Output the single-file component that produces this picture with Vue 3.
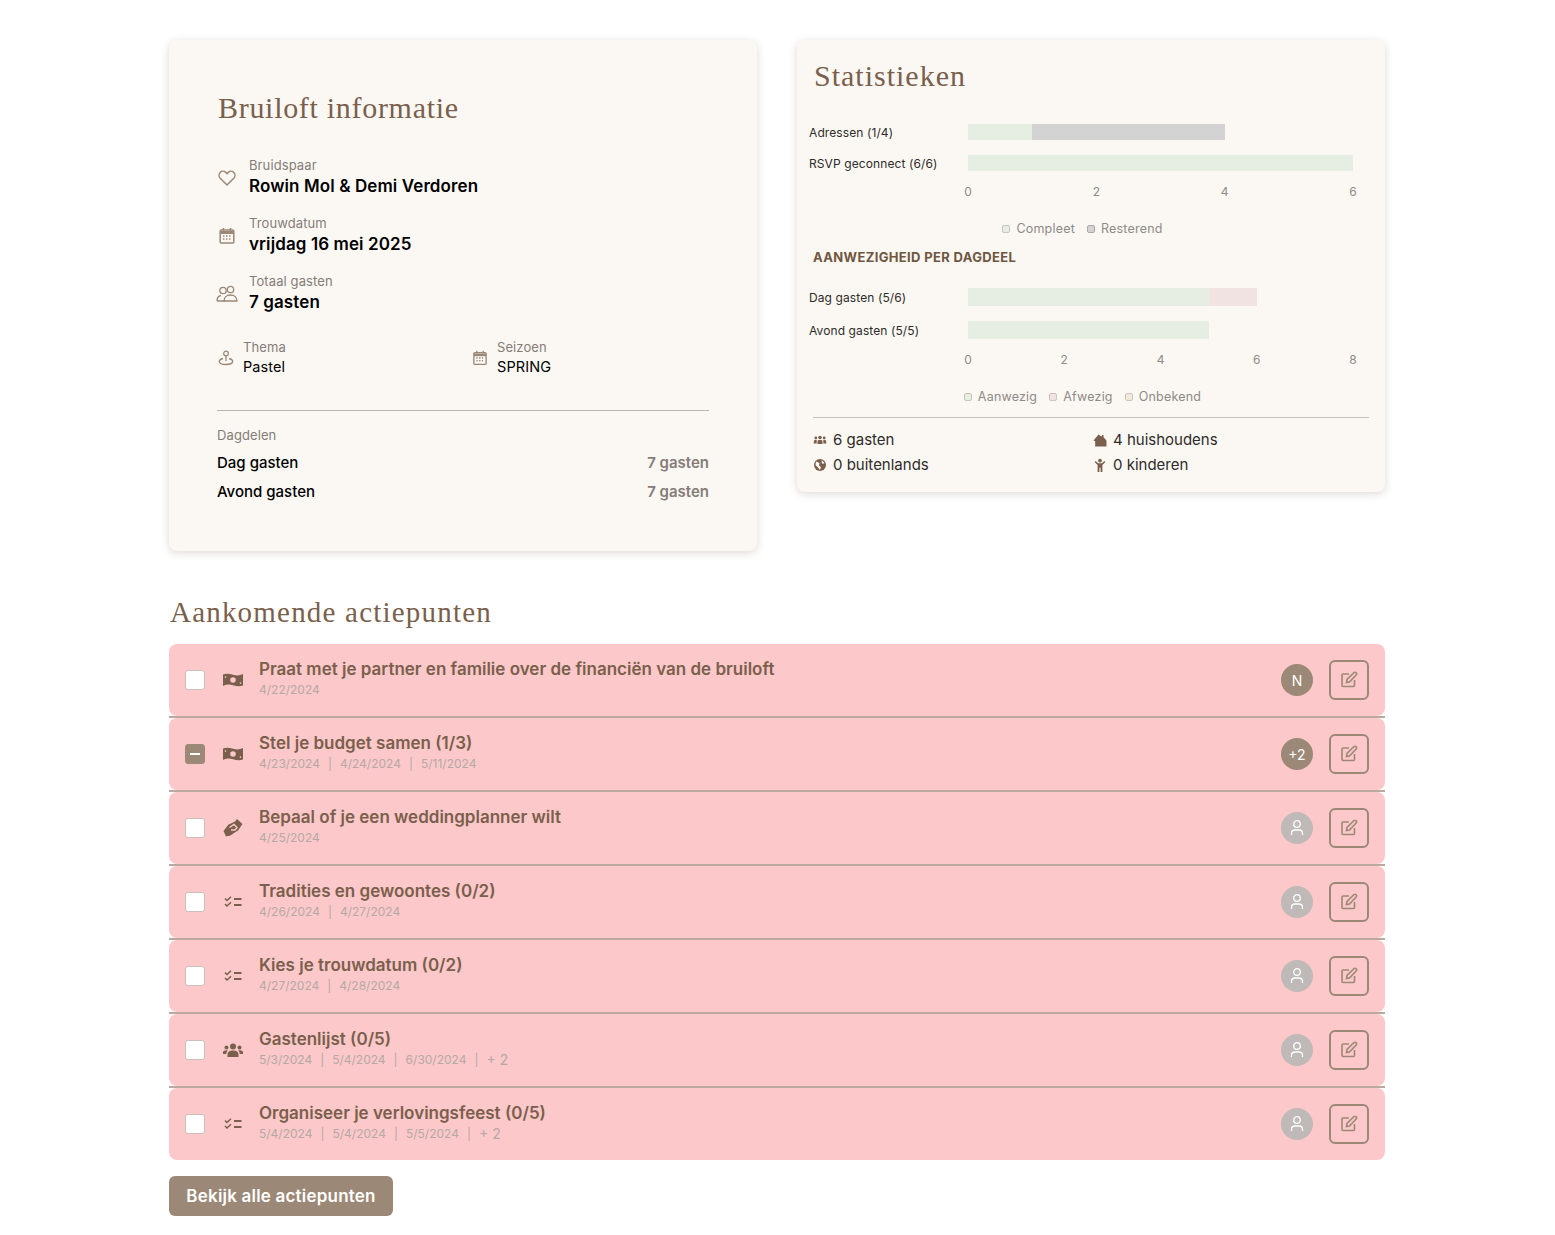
<script setup>
const coupleRows = [
  { label: "Bruidspaar", value: "Rowin Mol & Demi Verdoren", icon: "heart" },
  { label: "Trouwdatum", value: "vrijdag 16 mei 2025", icon: "calendar" },
  { label: "Totaal gasten", value: "7 gasten", icon: "people" },
];

const chartOne = {
  max: 6,
  ticks: [0, 2, 4, 6],
  rows: [
    { label: "Adressen (1/4)", parts: [{ value: 1, color: "#e6ede3" }, { value: 3, color: "#d3d3d3" }] },
    { label: "RSVP geconnect (6/6)", parts: [{ value: 6, color: "#e6ede3" }] },
  ],
};

const chartTwo = {
  max: 8,
  ticks: [0, 2, 4, 6, 8],
  rows: [
    { label: "Dag gasten (5/6)", parts: [{ value: 5, color: "#e6ede3" }, { value: 1, color: "#f0e3e1" }] },
    { label: "Avond gasten (5/5)", parts: [{ value: 5, color: "#e6ede3" }] },
  ],
};

const actions = [
  { title: "Praat met je partner en familie over de financiën van de bruiloft", dates: ["4/22/2024"], icon: "money", avatar: "N" },
  { title: "Stel je budget samen (1/3)", dates: ["4/23/2024", "4/24/2024", "5/11/2024"], icon: "money", avatar: "+2", partial: true },
  { title: "Bepaal of je een weddingplanner wilt", dates: ["4/25/2024"], icon: "hands" },
  { title: "Tradities en gewoontes (0/2)", dates: ["4/26/2024", "4/27/2024"], icon: "list" },
  { title: "Kies je trouwdatum (0/2)", dates: ["4/27/2024", "4/28/2024"], icon: "list" },
  { title: "Gastenlijst (0/5)", dates: ["5/3/2024", "5/4/2024", "6/30/2024", "+ 2"], icon: "users" },
  { title: "Organiseer je verlovingsfeest (0/5)", dates: ["5/4/2024", "5/4/2024", "5/5/2024", "+ 2"], icon: "list" },
];
</script>

<template>
  <main class="page">
    <div class="top-grid">
      <section class="card info-card">
        <h2 class="info-title">Bruiloft informatie</h2>

        <div v-for="row in coupleRows" :key="row.label" class="info-row">
          <span class="info-icon">
            <svg v-if="row.icon === 'heart'" width="20" height="20" viewBox="0 0 20 20" fill="none" stroke="#9c8876" stroke-width="1.5" stroke-linejoin="round">
              <path d="M10 17 3.200 10.200a4.200 4.200 0 0 1 0-5.800 4 4 0 0 1 5.600 0L10 5.600l1.200-1.200a4 4 0 0 1 5.600 0 4.200 4.200 0 0 1 0 5.800z" />
            </svg>
            <svg v-else-if="row.icon === 'calendar'" width="20" height="20" viewBox="0 0 20 20" fill="none" stroke="#9c8876" stroke-width="1.5">
              <rect x="3.200" y="4" width="13.600" height="13" rx="1" />
              <path d="M3.200 6.500h13.600" stroke-width="3" />
              <path d="M6.500 2v3M13.500 2v3" />
              <path d="M6 10h2M9 10h2M12 10h2M6 13h2M9 13h2M12 13h2" stroke-dasharray="1.500 .5" stroke-width="1.400" />
            </svg>
            <svg v-else class="people-icon" width="22" height="20" viewBox="0 0 22 20" fill="none" stroke="#9c8876" stroke-width="1.300">
              <circle cx="7" cy="6.500" r="3.200" />
              <circle cx="14.500" cy="5.500" r="3.200" />
              <path d="M1 17c0-3 1.500-5 4-5.500M9.500 17H1" />
              <path d="M8 17c0-3.500 2.500-6 6.500-6s6.500 2.500 6.500 6z" />
            </svg>
          </span>
          <div>
            <div class="info-label">{{ row.label }}</div>
            <div class="info-value">{{ row.value }}</div>
          </div>
        </div>

        <div class="theme-grid">
          <div class="theme-item">
            <svg class="theme-icon" width="18" height="18" viewBox="0 0 18 18" fill="none" stroke="#9c8876" stroke-width="1.300">
              <circle cx="9" cy="4.500" r="2.300" />
              <path d="M9 7v5" />
              <path d="M6 9.500c-2 .5-3.700 1.500-3.700 3 0 1.800 3 3 6.700 3s6.700-1.200 6.700-3c0-1.500-1.700-2.500-3.700-3" />
            </svg>
            <div>
              <div class="info-label">Thema</div>
              <div class="theme-value">Pastel</div>
            </div>
          </div>
          <div class="theme-item">
            <svg class="theme-icon" width="18" height="18" viewBox="0 0 20 20" fill="none" stroke="#9c8876" stroke-width="1.5">
              <rect x="3.200" y="4" width="13.600" height="13" rx="1" />
              <path d="M3.200 6.500h13.600" stroke-width="3" />
              <path d="M6.500 2v3M13.500 2v3" />
              <path d="M6 10h2M9 10h2M12 10h2M6 13h2M9 13h2M12 13h2" stroke-dasharray="1.500 .5" stroke-width="1.400" />
            </svg>
            <div>
              <div class="info-label">Seizoen</div>
              <div class="theme-value">SPRING</div>
            </div>
          </div>
        </div>

        <div class="parts">
          <div class="info-label parts-label">Dagdelen</div>
          <div class="part-row"><span>Dag gasten</span><b>7 gasten</b></div>
          <div class="part-row"><span>Avond gasten</span><b>7 gasten</b></div>
        </div>
      </section>

      <section class="card stats-card">
        <h2 class="stats-title">Statistieken</h2>

        <div class="chart chart-one">
          <div v-for="row in chartOne.rows" :key="row.label" class="bar-row">
            <span class="bar-label">{{ row.label }}</span>
            <div class="bar-track">
              <i v-for="(part, i) in row.parts" :key="i" :style="{ width: (part.value / chartOne.max) * 100 + '%', background: part.color }"></i>
            </div>
          </div>
          <div class="axis">
            <span v-for="tick in chartOne.ticks" :key="tick" class="tick"><em>{{ tick }}</em></span>
          </div>
          <div class="legend">
            <span><i class="swatch green"></i>Compleet</span>
            <span><i class="swatch grey"></i>Resterend</span>
          </div>
        </div>

        <h3 class="stats-sub">AANWEZIGHEID PER DAGDEEL</h3>

        <div class="chart chart-two">
          <div v-for="row in chartTwo.rows" :key="row.label" class="bar-row">
            <span class="bar-label">{{ row.label }}</span>
            <div class="bar-track">
              <i v-for="(part, i) in row.parts" :key="i" :style="{ width: (part.value / chartTwo.max) * 100 + '%', background: part.color }"></i>
            </div>
          </div>
          <div class="axis">
            <span v-for="tick in chartTwo.ticks" :key="tick" class="tick"><em>{{ tick }}</em></span>
          </div>
          <div class="legend">
            <span><i class="swatch green"></i>Aanwezig</span>
            <span><i class="swatch rose"></i>Afwezig</span>
            <span><i class="swatch sand"></i>Onbekend</span>
          </div>
        </div>

        <div class="totals">
          <div class="total">
            <svg width="14" height="14" viewBox="0 0 14 14" fill="#7a5f4c">
              <circle cx="7" cy="4.500" r="1.800" /><circle cx="2.800" cy="5" r="1.400" /><circle cx="11.200" cy="5" r="1.400" />
              <path d="M4.500 11V8.500C4.500 7.300 5.500 7 7 7s2.500.3 2.500 1.500V11zM.8 10.500V8.300c0-1 .8-1.400 2-1.400l.9.1V10.500zM13.200 10.500V8.300c0-1-.8-1.400-2-1.400l-.9.1V10.500z" />
            </svg>
            6 gasten
          </div>
          <div class="total">
            <svg width="14" height="14" viewBox="0 0 14 14" fill="#7a5f4c">
              <path d="M.5 7.500 5.500 1.500 8 3.200h1V2h1.500v2.300L13.500 7.500V13.500H2.200V8.200z" />
            </svg>
            4 huishoudens
          </div>
          <div class="total">
            <svg width="14" height="14" viewBox="0 0 14 14">
              <circle cx="7" cy="7" r="6" fill="#7a5f4c" />
              <path d="M3 3.500 6.500 5 6 7.500 8 9l-1 3-2-2.500L2.500 7zM9 2.500 11.500 5 9.500 6 8.500 4z" fill="#fbf8f4" />
            </svg>
            0 buitenlands
          </div>
          <div class="total">
            <svg width="14" height="14" viewBox="0 0 14 14" fill="#7a5f4c">
              <circle cx="7" cy="2.600" r="1.900" />
              <path d="M2.500 3 5.200 5.300h3.600L11.500 3l.9 1-3 3v7H7.600V9.700H6.400V14H4.600V7l-3-3z" />
            </svg>
            0 kinderen
          </div>
        </div>
      </section>
    </div>

    <h2 class="actions-title">Aankomende actiepunten</h2>

    <div class="actions">
      <div v-for="action in actions" :key="action.title" class="action-wrap">
        <div class="action">
          <span class="check" :class="{ partial: action.partial }"><i v-if="action.partial"></i></span>
          <span class="action-icon">
            <svg v-if="action.icon === 'money'" width="20" height="14" viewBox="0 0 20 14">
              <path fill="#7a5f4c" fill-rule="evenodd" d="M0 1.500C3 .3 6.500.7 10 1.700c3.500 1 6.800 1 10-.7v11.500c-3 1.200-6.500.8-10-.2-3.500-1-6.800-1-10 .7zM10 4.200a2.800 2.800 0 1 0 0 5.600 2.800 2.800 0 0 0 0-5.600zM2.500 3.300a.8.800 0 1 0 0 1.600.8.800 0 0 0 0-1.600zm15 6a.8.800 0 1 0 0 1.600.8.800 0 0 0 0-1.600z" />
            </svg>
            <svg v-else-if="action.icon === 'hands'" width="20" height="18" viewBox="0 0 20 18">
              <path fill="#7a5f4c" d="M.5 12 5.500 5.500 9 4l3-1.500 2-2.500 5.500 5-4.500 6.500-4 2.500-3.500 2.500L5 17l-2 .5z" />
              <path fill="none" stroke="#fcc8c9" stroke-width="1.400" d="M6.500 8.500 11 5.500l3 3-2 2.500-4 0" />
            </svg>
            <svg v-else-if="action.icon === 'list'" width="18" height="12" viewBox="0 0 18 12" fill="none" stroke="#7a5f4c" stroke-width="1.500">
              <path d="M1 2.500 3 4.500 7 .8M1 8 3 10 7 6.300" />
              <path d="M10 3h7.500M10 9h7.500" stroke-width="1.800" />
            </svg>
            <svg v-else width="20" height="14" viewBox="0 0 20 14" fill="#7a5f4c">
              <circle cx="10" cy="3.500" r="3" /><circle cx="3.500" cy="4.500" r="2" /><circle cx="16.500" cy="4.500" r="2" />
              <path d="M4.500 14v-2.500C4.500 9 6.500 7.500 10 7.500s5.500 1.500 5.500 4V14zM0 11V9.500C0 8 1.200 7.200 3.500 7.200l1.300.2C3.800 8.200 3.300 9.500 3.300 11zM20 11V9.500c0-1.500-1.200-2.300-3.500-2.300l-1.300.2c1 .8 1.500 2.100 1.500 3.600z" />
            </svg>
          </span>
          <div class="action-text">
            <div class="action-title">{{ action.title }}</div>
            <div class="action-dates">
              <template v-for="(date, i) in action.dates" :key="i">
                <span v-if="i > 0" class="date-sep">|</span>
                <span :class="{ 'date-more': date.startsWith('+') }">{{ date }}</span>
              </template>
            </div>
          </div>
          <span v-if="action.avatar" class="avatar">{{ action.avatar }}</span>
          <span v-else class="avatar empty">
            <svg width="16" height="18" viewBox="0 0 16 18" fill="none" stroke="#fff" stroke-width="1.300">
              <circle cx="8" cy="5" r="3.300" />
              <path d="M2.500 16v-1.500c0-2 1.500-3.500 3.500-3.500h4c2 0 3.500 1.500 3.500 3.500V16" />
            </svg>
          </span>
          <button type="button" class="edit">
            <svg width="18" height="18" viewBox="0 0 18 18" fill="none" stroke="#9c8876" stroke-width="1.600">
              <path d="M9 3H3a1 1 0 0 0-1 1v10.500a1 1 0 0 0 1 1h10.500a1 1 0 0 0 1-1V9" />
              <path d="M6.500 11.500 7 8.500l6.800-6.800a1.400 1.400 0 0 1 2.300 2.300L9.500 11z" />
            </svg>
          </button>
        </div>
      </div>
    </div>

    <button type="button" class="see-all">Bekijk alle actiepunten</button>
  </main>
</template>

<style scoped>
.page {
  width: 1216px;
  margin: 0 0 0 169px;
  padding: 40px 0 19px;
  font-family: Inter, "Liberation Sans", sans-serif;
  color: #000;
}

.top-grid {
  display: grid;
  grid-template-columns: 588px 588px;
  gap: 40px;
  align-items: start;
}

.card {
  background: #fbf8f4;
  border-radius: 8px;
  box-shadow: 0 2px 8px rgba(90, 70, 50, 0.2);
}

.info-card {
  height: 511px;
  padding: 48px 48px 0;
  box-sizing: border-box;
}

.info-title {
  margin: 0 0 28px 1px;
  font: 400 30px/40px "Liberation Serif", serif;
  letter-spacing: 0.7px;
  color: #7a5f4c;
}

.info-row {
  display: flex;
  align-items: center;
  height: 42px;
  margin-bottom: 16px;
}

.info-icon {
  width: 32px;
  display: flex;
  flex: none;
  margin-top: 2px;
}

.people-icon {
  margin-left: -1px;
}

.info-label {
  font-size: 13px;
  line-height: 18px;
  letter-spacing: 0.1px;
  color: #857c78;
}

.info-value {
  font-size: 17px;
  line-height: 24px;
  font-weight: 600;
  letter-spacing: 0.1px;
}

.theme-grid {
  display: grid;
  grid-template-columns: 254px 1fr;
  margin-top: 24px;
}

.theme-item {
  display: flex;
  align-items: center;
  gap: 8px;
}

.theme-icon {
  flex: none;
}

.theme-value {
  font-size: 14.5px;
  line-height: 22px;
  font-weight: 400;
  letter-spacing: 0.1px;
}

.parts {
  margin-top: 32px;
  padding-top: 15px;
  border-top: 1px solid #bdb5ad;
}

.parts-label {
  margin-bottom: 4px;
}

.part-row {
  display: flex;
  justify-content: space-between;
  height: 29px;
  line-height: 29px;
  font-size: 15px;
  font-weight: 500;
}

.part-row b {
  font-weight: 600;
  color: #857c78;
}

.stats-card {
  height: 452px;
  padding: 16px 16px 0 12px;
  box-sizing: border-box;
}

.stats-title {
  margin: 0 0 28px 5px;
  font: 400 30px/40px "Liberation Serif", serif;
  letter-spacing: 1px;
  color: #7a5f4c;
}

.bar-row {
  display: flex;
  align-items: center;
  margin-bottom: 15px;
}

.bar-label {
  width: 159px;
  flex: none;
  font-size: 12px;
  letter-spacing: 0.1px;
  color: #2f2b28;
}

.bar-track {
  width: 385px;
  display: flex;
  height: 16px;
}

.chart-two .bar-track {
  height: 18px;
}

.bar-track i {
  display: block;
  height: 100%;
}

.axis {
  display: flex;
  justify-content: space-between;
  width: 385px;
  margin: -2px 0 0 159px;
  height: 20px;
  font-size: 12px;
  color: #8f8a85;
}

.tick {
  width: 0;
  display: flex;
  justify-content: center;
}

.tick em {
  font-style: normal;
  line-height: 16px;
}

.legend {
  display: flex;
  justify-content: center;
  gap: 12px;
  width: 547px;
  margin-top: 17px;
  font-size: 12.5px;
  line-height: 16px;
  letter-spacing: 0.2px;
  color: #8f8a85;
}

.legend span {
  display: flex;
  align-items: center;
  gap: 6px;
}

.swatch {
  width: 8px;
  height: 8px;
  border: 1px solid #c9c5bd;
  border-radius: 2px;
  box-sizing: border-box;
}

.swatch.green { background: #e6ede3; }
.swatch.grey { background: #d3d3d3; border-color: #aaa; }
.swatch.rose { background: #f0e3e1; }
.swatch.sand { background: #f1e8d8; }

.stats-sub {
  margin: 12px 0 23px 4px;
  font-size: 13px;
  line-height: 16px;
  font-weight: 700;
  letter-spacing: 0.35px;
  color: #6f563f;
}

.totals {
  display: grid;
  grid-template-columns: 280px 1fr;
  margin: 12px 0 0 4px;
  padding-top: 9px;
  border-top: 1px solid #c6c1ba;
}

.total {
  display: flex;
  align-items: center;
  gap: 6px;
  height: 25px;
  font-size: 15px;
  color: #2f2b28;
}

.actions-title {
  margin: 41px 0 12px 1px;
  font: 400 29px/40px "Liberation Serif", serif;
  letter-spacing: 1.2px;
  color: #7a5f4c;
}

.actions {
  display: flex;
  flex-direction: column;
}

.action-wrap {
  border-bottom: 2px solid #bba99e;
}

.action-wrap:last-child {
  border-bottom: none;
}

.action {
  display: flex;
  align-items: center;
  height: 72px;
  padding: 0 16px;
  background: #fcc8c9;
  border-radius: 8px;
  box-sizing: border-box;
}

.check {
  width: 20px;
  height: 20px;
  flex: none;
  display: flex;
  align-items: center;
  justify-content: center;
  background: #fff;
  border: 1px solid #c9c0bb;
  border-radius: 3px;
  box-sizing: border-box;
}

.check.partial {
  background: #9c8876;
  border-color: #9c8876;
}

.check i {
  width: 10px;
  height: 2px;
  background: #fff;
}

.action-icon {
  width: 20px;
  flex: none;
  display: flex;
  justify-content: center;
  margin: 0 16px 0 18px;
}

.action-text {
  flex: 1;
  min-width: 0;
  margin-top: -2px;
}

.action-title {
  font-size: 17px;
  line-height: 20px;
  font-weight: 600;
  margin-bottom: 1px;
  color: #7a5f4c;
}

.action-dates {
  display: flex;
  gap: 8px;
  font-size: 12px;
  line-height: 20px;
  color: #b5a8a6;
}

.date-more {
  font-size: 14px;
}

.avatar {
  width: 32px;
  height: 32px;
  flex: none;
  border-radius: 50%;
  display: flex;
  align-items: center;
  justify-content: center;
  margin-right: 16px;
  background: #9c8876;
  color: #fff;
  font-size: 14px;
}

.avatar.empty {
  background: #bfb9b8;
}

.edit {
  width: 40px;
  height: 40px;
  flex: none;
  display: flex;
  align-items: center;
  justify-content: center;
  padding: 0;
  background: transparent;
  border: 2px solid #9c8876;
  border-radius: 6px;
}

.see-all {
  display: block;
  margin-top: 16px;
  width: 224px;
  height: 40px;
  padding: 0;
  background: #9c8876;
  color: #fff;
  border: none;
  border-radius: 6px;
  font: 600 17px/40px Inter, "Liberation Sans", sans-serif;
  letter-spacing: 0.2px;
}
</style>

<style>
html,
body {
  background: #fff;
}
</style>
